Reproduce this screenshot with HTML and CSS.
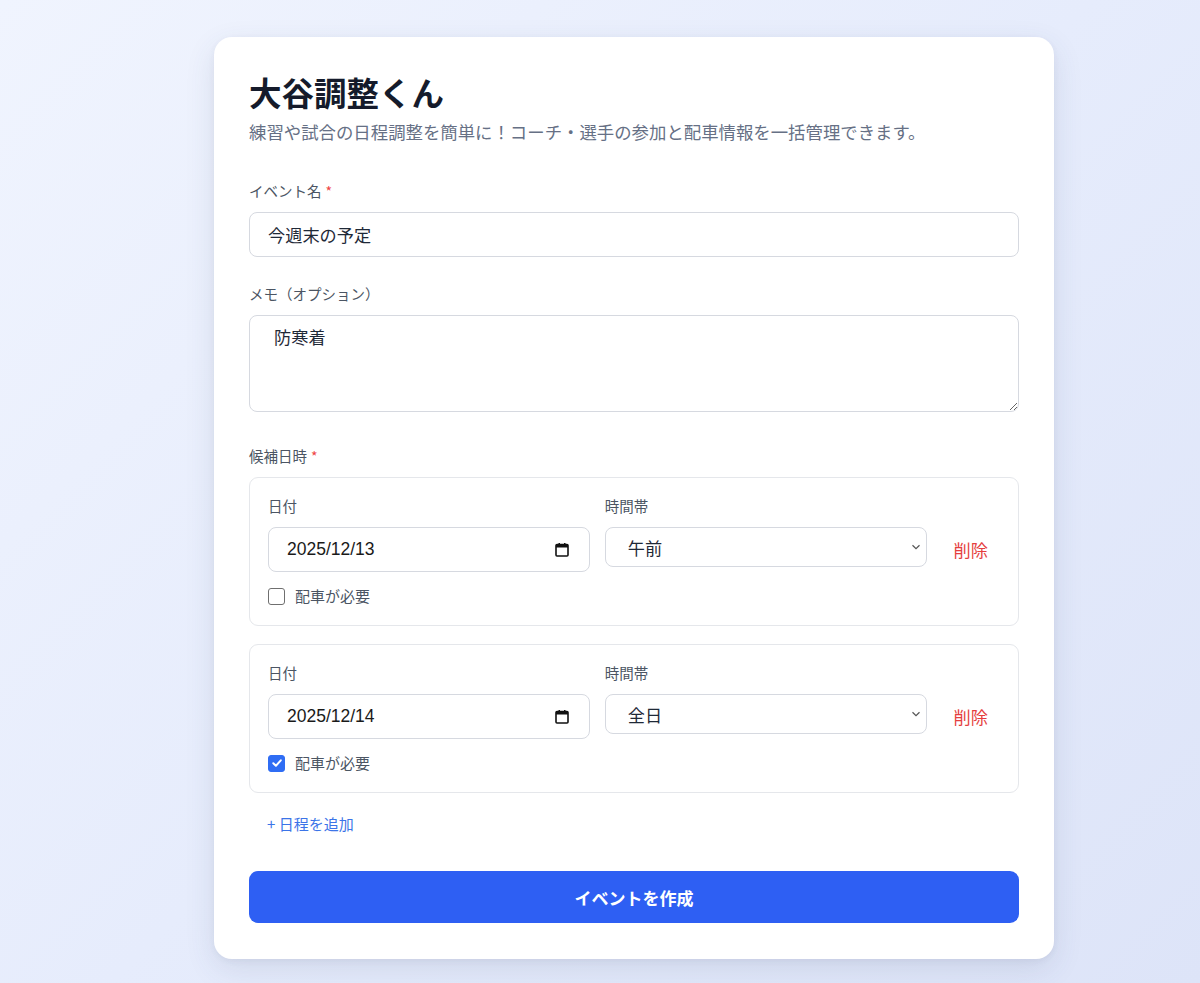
FILE: index.html
```html
<!DOCTYPE html>
<html lang="ja">
<head>
<meta charset="utf-8">
<title>大谷調整くん</title>
<link rel="stylesheet" href="styles.css">
</head>
<body>
<main class="card">
  <h1 class="title">大谷調整くん</h1>
  <p class="subtitle">練習や試合の日程調整を簡単に！コーチ・選手の参加と配車情報を一括管理できます。</p>

  <div class="field">
    <label class="label">イベント名<span class="req">*</span></label>
    <input class="input" type="text" value="今週末の予定">
  </div>

  <div class="field">
    <label class="label">メモ（オプション）</label>
    <textarea class="textarea">防寒着</textarea>
  </div>

  <div class="field">
    <label class="label label-slots">候補日時<span class="req">*</span></label>
    <div class="slots">
      <div class="slot">
        <div class="slot-grid">
          <div class="col">
            <span class="sublabel">日付</span>
            <div class="datebox">
              <input class="date-text" type="text" value="2025/12/13">
              <svg class="cal" width="16" height="16" viewBox="0 0 16 16" aria-hidden="true"><rect x="2" y="2.5" width="12" height="11.5" rx="1" fill="none" stroke="#111" stroke-width="1.6"/><rect x="2" y="2.5" width="12" height="3" fill="#111"/><rect x="4.5" y="1" width="1.5" height="2" fill="#111"/><rect x="10" y="1" width="1.5" height="2" fill="#111"/></svg>
            </div>
          </div>
          <div class="col">
            <span class="sublabel">時間帯</span>
            <div class="selectbox">
              <span class="select-text">午前</span>
              <svg width="10" height="6" viewBox="0 0 10 6" aria-hidden="true"><path d="M1.5 1.2 L5 4.6 L8.5 1.2" fill="none" stroke="#555" stroke-width="1.2"/></svg>
            </div>
          </div>
          <button class="delete" type="button">削除</button>
        </div>
        <label class="check"><span class="box"></span>配車が必要</label>
      </div>

      <div class="slot">
        <div class="slot-grid">
          <div class="col">
            <span class="sublabel">日付</span>
            <div class="datebox">
              <input class="date-text" type="text" value="2025/12/14">
              <svg class="cal" width="16" height="16" viewBox="0 0 16 16" aria-hidden="true"><rect x="2" y="2.5" width="12" height="11.5" rx="1" fill="none" stroke="#111" stroke-width="1.6"/><rect x="2" y="2.5" width="12" height="3" fill="#111"/><rect x="4.5" y="1" width="1.5" height="2" fill="#111"/><rect x="10" y="1" width="1.5" height="2" fill="#111"/></svg>
            </div>
          </div>
          <div class="col">
            <span class="sublabel">時間帯</span>
            <div class="selectbox">
              <span class="select-text">全日</span>
              <svg width="10" height="6" viewBox="0 0 10 6" aria-hidden="true"><path d="M1.5 1.2 L5 4.6 L8.5 1.2" fill="none" stroke="#555" stroke-width="1.2"/></svg>
            </div>
          </div>
          <button class="delete" type="button">削除</button>
        </div>
        <label class="check"><span class="box box-checked"><svg width="12" height="12" viewBox="0 0 12 12" aria-hidden="true"><path d="M2.3 6.3 L4.9 8.8 L9.8 3.3" fill="none" stroke="#fff" stroke-width="2" stroke-linecap="round" stroke-linejoin="round"/></svg></span>配車が必要</label>
      </div>
    </div>
    <button class="add" type="button">+ 日程を追加</button>
  </div>

  <button class="submit" type="button">イベントを作成</button>
</main>
</body>
</html>
```

FILE: styles.css
```css
* { box-sizing: border-box; }

html, body {
  margin: 0;
  height: 100%;
}

body {
  min-height: 983px;
  background: linear-gradient(135deg, #f0f4fe 0%, #e6ecfc 50%, #dde4f8 100%);
  font-family: "Noto Sans CJK JP", "Liberation Sans", sans-serif;
  color: #1f2937;
  padding-top: 37px;
}

.card {
  width: 840px;
  margin: 0 0 0 214px;
  background: #fff;
  border-radius: 18px;
  padding: 35px 35px 36px;
  box-shadow: 0 10px 30px rgba(60, 70, 110, 0.12), 0 2px 6px rgba(60, 70, 110, 0.06);
}

.title {
  margin: 0;
  font-size: 32.5px;
  line-height: 40px;
  font-weight: 700;
  color: #151b2b;
}

.subtitle {
  margin: 8px 0 0;
  font-size: 17.4px;
  line-height: 24px;
  color: #667085;
}

.field {
  display: flex;
  flex-direction: column;
}

.field:nth-of-type(1) { margin-top: 37px; }
.field + .field { margin-top: 27px; }
.field:nth-of-type(3) { margin-top: 34px; }

.label {
  display: block;
  font-size: 14.5px;
  line-height: 20px;
  color: #4b5563;
  margin-bottom: 11px;
}

.label-slots { margin-bottom: 11px; }

.req {
  color: #ef4444;
  margin-left: 4px;
  font-size: 14px;
}

.input {
  display: block;
  width: 100%;
  height: 45px;
  border: 1px solid #d6d9e0;
  border-radius: 8px;
  padding: 0 18px;
  font-family: "Noto Sans CJK JP", sans-serif;
  font-size: 17.2px;
  color: #1f2937;
  background: #fff;
  outline: none;
}

.textarea {
  display: block;
  width: 100%;
  height: 97px;
  border: 1px solid #d6d9e0;
  border-radius: 8px;
  padding: 9px 24px;
  font-family: "Noto Sans CJK JP", sans-serif;
  font-size: 17.2px;
  line-height: 24px;
  color: #1f2937;
  resize: vertical;
  outline: none;
}

.slots {
  display: flex;
  flex-direction: column;
  gap: 18px;
}

.slot {
  border: 1px solid #e5e7eb;
  border-radius: 9px;
  padding: 18px 18px 19px;
}

.slot-grid {
  display: grid;
  grid-template-columns: 1fr 1fr auto;
  column-gap: 15px;
  align-items: end;
}

.col {
  display: flex;
  flex-direction: column;
  align-self: start;
}

.sublabel {
  font-size: 14.5px;
  line-height: 20px;
  color: #4b5563;
  margin-bottom: 11px;
}

.datebox {
  display: flex;
  align-items: center;
  height: 45px;
  border: 1px solid #d6d9e0;
  border-radius: 8px;
  padding: 0 19px 0 18px;
}

.date-text {
  flex: 1;
  min-width: 0;
  border: 0;
  outline: none;
  padding: 0;
  font-family: "Liberation Sans", Arial, sans-serif;
  font-size: 17.5px;
  color: #1a1a1a;
  background: transparent;
}

.cal { flex: none; margin-top: 1px; }

.selectbox {
  display: flex;
  align-items: center;
  justify-content: space-between;
  height: 40px;
  border: 1px solid #d6d9e0;
  border-radius: 8px;
  padding: 0 5px 0 22px;
  background: #fff;
}

.select-text {
  font-size: 17.2px;
  color: #1f2937;
}

.delete {
  height: 45px;
  align-self: start;
  margin-top: 31px;
  padding: 0 12px;
  border: 0;
  background: transparent;
  color: #e53e3e;
  font-family: "Noto Sans CJK JP", sans-serif;
  font-size: 17.2px;
  cursor: pointer;
}

.check {
  display: flex;
  align-items: center;
  gap: 10px;
  margin-top: 14px;
  font-size: 15px;
  line-height: 20px;
  color: #4b5563;
}

.box {
  width: 17px;
  height: 17px;
  border: 1.3px solid #6f6f6f;
  border-radius: 3px;
  background: #fff;
  display: flex;
  align-items: center;
  justify-content: center;
}

.box-checked {
  background: #2f6df4;
  border-color: #2f6df4;
}

.add {
  align-self: flex-start;
  margin-top: 20px;
  padding: 0 18px;
  border: 0;
  background: transparent;
  color: #3b74e8;
  font-family: "Noto Sans CJK JP", sans-serif;
  font-size: 15px;
  line-height: 22px;
  cursor: pointer;
}

.submit {
  display: block;
  width: 100%;
  height: 52px;
  margin-top: 36px;
  border: 0;
  border-radius: 9px;
  background: #2e5ff3;
  color: #fff;
  font-family: "Noto Sans CJK JP", sans-serif;
  font-weight: 700;
  font-size: 17px;
  cursor: pointer;
}
```
